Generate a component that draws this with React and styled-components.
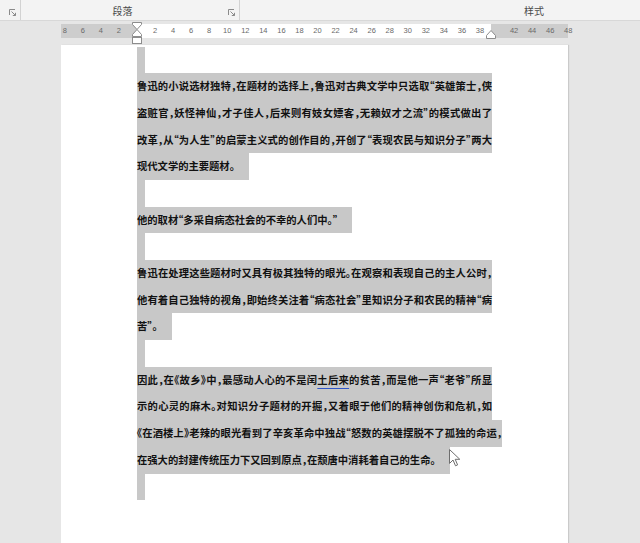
import styled, { createGlobalStyle } from 'styled-components';

const GlobalStyle = createGlobalStyle`
  html, body {
    margin: 0;
    padding: 0;
    background: #e6e6e6;
    overflow: hidden;
  }
  body {
    font-family: "Noto Sans CJK SC", "Liberation Sans", sans-serif;
  }
`;

const LINE = 26.7;
const UNIT = 18.05; // px per 2 ruler units
const ZERO = 76; // left margin inside the ruler

const Screen = styled.div`
  position: relative;
  width: 640px;
  height: 543px;
  overflow: hidden;
  display: flex;
  flex-direction: column;
`;

/* Ribbon (group labels row) */
const Ribbon = styled.div`
  display: flex;
  height: 20px;
  background: #f3f3f3;
  border-bottom: 1px solid #d8d8d8;
  flex-shrink: 0;
`;

const Group = styled.div`
  display: flex;
  align-items: center;
  width: ${(p) => p.$width || 'auto'};
  flex: ${(p) => (p.$width ? 'none' : 1)};
  padding-left: ${(p) => p.$pad || 0}px;
  border-right: ${(p) => (p.$sep ? '1px solid #d2d2d2' : 'none')};
`;

const GroupLabel = styled.span`
  flex: ${(p) => (p.$grow ? 1 : 'none')};
  text-align: center;
  font-size: 10px;
  line-height: 12px;
  color: #4a4a4a;
  padding-top: 2px;
`;

const Launcher = styled.span`
  width: 15px;
  display: flex;
  justify-content: center;
  padding-top: 5px;
  margin-left: auto;
`;

function LauncherIcon() {
  return (
    <svg width="8" height="8" viewBox="0 0 8 8">
      <path d="M0.5 6V0.5H6" fill="none" stroke="#8a8a8a" strokeWidth="1" />
      <path d="M2.5 2.5L6.5 6.5M3.8 6.5H6.5V3.8" fill="none" stroke="#8a8a8a" strokeWidth="1" />
    </svg>
  );
}

/* Ruler */
const RulerBar = styled.div`
  height: 24px;
  flex-shrink: 0;
  padding: 3px 0 0 61px;
  box-sizing: border-box;
`;

const Ruler = styled.div`
  position: relative;
  display: flex;
  width: 507px;
  height: 14px;
`;

const RulerPart = styled.div`
  width: ${(p) => p.$w}px;
  flex: none;
  background: ${(p) => (p.$white ? '#ffffff' : '#cdcdcd')};
`;

const Tick = styled.span`
  position: absolute;
  top: 0;
  width: 16px;
  margin-left: -8px;
  text-align: center;
  font-family: "Liberation Sans", sans-serif;
  font-size: 7.5px;
  line-height: 14px;
  color: #6a6a6a;
`;

const Marker = styled.svg`
  position: absolute;
  left: ${(p) => p.$x}px;
  top: ${(p) => p.$y}px;
`;

/* Document page */
const Page = styled.div`
  flex: 1;
  width: 507px;
  margin-left: 61px;
  background: #ffffff;
  box-shadow: 1px 0 1px rgba(0, 0, 0, 0.12);
  padding: 1.5px 0 0 76px;
  box-sizing: border-box;
  color: #111111;
  font-family: "Noto Sans CJK SC", "Noto Sans CJK TC", sans-serif;
  font-size: 10.3px;
  font-weight: 700;
  font-feature-settings: "halt";
`;

const Line = styled.div`
  height: ${LINE}px;
  line-height: ${LINE}px;
  background: #c8c8c8;
  white-space: nowrap;
  width: ${(p) => (p.$last ? 'fit-content' : p.$wide ? '365px' : '355px')};
  padding-right: ${(p) => (p.$last ? '14px' : '0')};
  text-align: justify;
  text-align-last: ${(p) => (p.$last ? 'left' : 'justify')};
  overflow: visible;
`;

const EmptyPara = styled.div`
  height: ${LINE}px;
  width: 8px;
  background: #c8c8c8;
`;

const Grammar = styled.span`
  text-decoration: underline;
  text-decoration-color: #2f55c8;
  text-decoration-thickness: 1px;
  text-underline-offset: 4px;
`;

const Cursor = styled.svg`
  position: absolute;
  left: 449px;
  top: 449px;
`;

const leftNums = [8, 6, 4, 2];
const rightNums = [2, 4, 6, 8, 10, 12, 14, 16, 18, 20, 22, 24, 26, 28, 30, 32, 34, 36, 38];
const farNums = [42, 44, 46, 48];

function Paragraph({ lines }) {
  return (
    <>
      {lines.map((l, i) => (
        <Line key={i} $last={i === lines.length - 1} $wide={l.wide}>
          {l.text}
        </Line>
      ))}
    </>
  );
}

export default function App() {
  return (
    <Screen>
      <GlobalStyle />
      <Ribbon>
        <Group $width="20px" $sep>
          <Launcher>
            <LauncherIcon />
          </Launcher>
        </Group>
        <Group $width="218px" $sep>
          <GroupLabel $grow>段落</GroupLabel>
          <Launcher>
            <LauncherIcon />
          </Launcher>
        </Group>
        <Group $pad={284}>
          <GroupLabel>样式</GroupLabel>
        </Group>
      </Ribbon>

      <RulerBar>
        <Ruler>
          <RulerPart $w={ZERO} />
          <RulerPart $w={354} $white />
          <RulerPart $w={77} />
          {leftNums.map((n) => (
            <Tick key={'l' + n} style={{ left: ZERO - (n / 2) * UNIT }}>{n}</Tick>
          ))}
          {rightNums.map((n) => (
            <Tick key={'r' + n} style={{ left: ZERO + (n / 2) * UNIT }}>{n}</Tick>
          ))}
          {farNums.map((n) => (
            <Tick key={'f' + n} style={{ left: ZERO + (n / 2) * UNIT - 2 }}>{n}</Tick>
          ))}
          <Marker $x={ZERO - 5} $y={-2} width="10" height="23" viewBox="0 0 10 23">
            <path d="M0.5 0.5H9.5V2.5L5 7.5L0.5 2.5Z" fill="#fff" stroke="#8c8c8c" />
            <path d="M5 7.5L9.5 12.5V14.5H0.5V12.5Z" fill="#fff" stroke="#8c8c8c" />
            <rect x="0.5" y="15.5" width="9" height="6" fill="#fff" stroke="#8c8c8c" />
          </Marker>
          <Marker $x={ZERO + 354 - 5} $y={6} width="10" height="9" viewBox="0 0 10 9">
            <path d="M5 0.5L9.5 5.5V8.5H0.5V5.5Z" fill="#fff" stroke="#8c8c8c" />
          </Marker>
        </Ruler>
      </RulerBar>

      <Page>
        <EmptyPara />
        <Paragraph
          lines={[
            { text: '鲁迅的小说选材独特，在题材的选择上，鲁迅对古典文学中只选取“英雄策士，侠' },
            { text: '盗赃官，妖怪神仙，才子佳人，后来则有妓女嫖客，无赖奴才之流”的模式做出了' },
            { text: '改革，从“为人生”的启蒙主义式的创作目的，开创了“表现农民与知识分子”两大' },
            { text: '现代文学的主要题材。' },
          ]}
        />
        <EmptyPara />
        <Paragraph lines={[{ text: '他的取材“多采自病态社会的不幸的人们中。”' }]} />
        <EmptyPara />
        <Paragraph
          lines={[
            { text: '鲁迅在处理这些题材时又具有极其独特的眼光。在观察和表现自己的主人公时，' },
            { text: '他有着自己独特的视角，即始终关注着“病态社会”里知识分子和农民的精神“病' },
            { text: '苦”。' },
          ]}
        />
        <EmptyPara />
        <Paragraph
          lines={[
            {
              text: (
                <>
                  因此，在《故乡》中，最感动人心的不是闰<Grammar>土后来</Grammar>的贫苦，而是他一声“老爷”所显
                </>
              ),
            },
            { text: '示的心灵的麻木。对知识分子题材的开掘，又着眼于他们的精神创伤和危机，如' },
            { text: '《在酒楼上》老辣的眼光看到了辛亥革命中独战“怒数的英雄摆脱不了孤独的命运，', wide: true },
            { text: '在强大的封建传统压力下又回到原点，在颓唐中消耗着自己的生命。' },
          ]}
        />
        <EmptyPara />
      </Page>

      <Cursor width="12" height="18" viewBox="0 0 12 18">
        <path
          d="M0.5 0.5V14.5L4 11L6.5 16.8L8.6 15.9L6.2 10.3H10.8Z"
          fill="#fff"
          stroke="#6e6e6e"
          strokeWidth="1"
          strokeLinejoin="round"
        />
      </Cursor>
    </Screen>
  );
}
